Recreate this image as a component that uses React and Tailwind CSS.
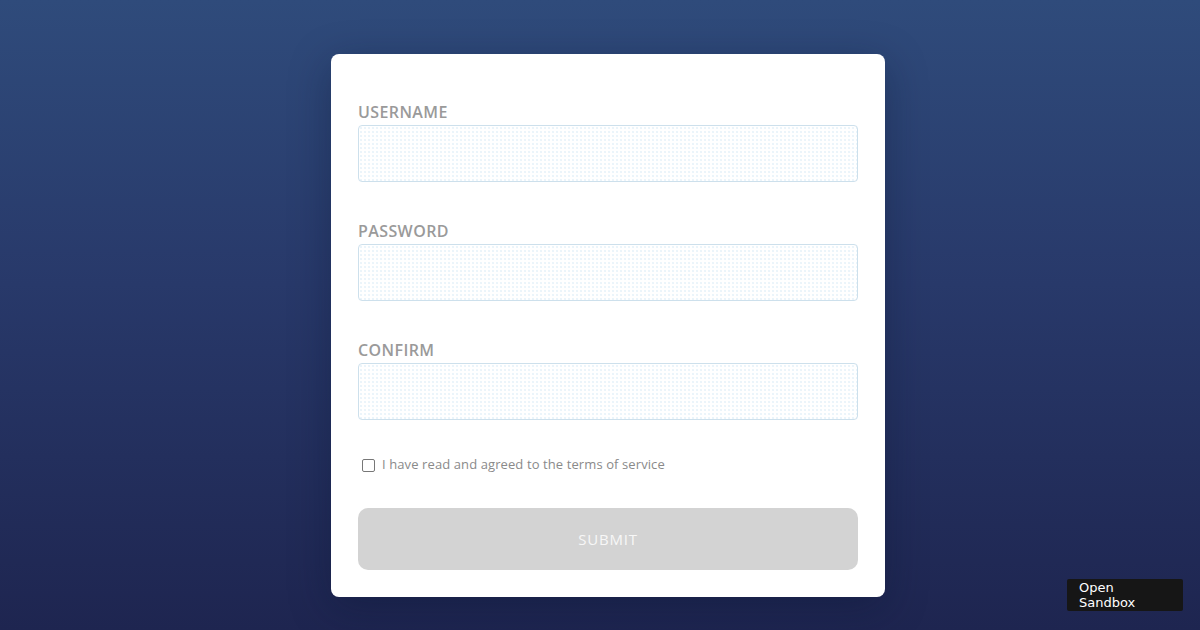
import React from "react";

function Field({ label }) {
  return (
    <div className="flex flex-col mb-[37px]">
      <label className="h-6 text-[16px] leading-6 font-semibold tracking-[0.4px] text-[#9a9a9a]">{label}</label>
      <div className="mt-[1px] h-[57px] rounded-[4px] border border-[#cde0ec] bg-white bg-[radial-gradient(#d4e8f4_0.6px,transparent_0.8px)] bg-[length:4px_4px]"></div>
    </div>
  );
}

export default function App() {
  return (
    <div
      className="relative w-[1200px] h-[630px] overflow-hidden bg-[linear-gradient(180deg,#2f4b7b_0%,#28396a_45%,#1e2550_100%)] flex justify-center items-start pl-[16px]"
      style={{ fontFamily: '"Open Sans", "Noto Sans", sans-serif' }}
    >
      <div className="mt-[54px] w-[554px] rounded-[8px] bg-white px-[27px] pt-[46px] pb-[27px] shadow-[0_10px_40px_rgba(10,20,50,0.35)] flex flex-col">
        <Field label="USERNAME" />
        <Field label="PASSWORD" />
        <Field label="CONFIRM" />
        <div className="-mt-[4px] flex items-center h-6 pl-[4px]">
          <span className="w-[13px] h-[13px] rounded-[2px] border border-[#777] bg-white"></span>
          <span className="ml-[7px] text-[13px] text-[#8a8a8a] tracking-[0.1px]">I have read and agreed to the terms of service</span>
        </div>
        <button className="mt-[31px] h-[62px] w-full rounded-[10px] bg-[#d3d3d3] text-[15px] tracking-[0.8px] text-[#f7f7f7]">
          SUBMIT
        </button>
      </div>
      <div
        className="absolute left-[1067px] top-[579px] w-[116px] h-[32px] rounded-[2px] bg-[#161616] pl-[12px] text-[13px] leading-[15px] text-white pt-[1px]"
        style={{ fontFamily: '"DejaVu Sans", sans-serif' }}
      >
        Open<br />Sandbox
      </div>
    </div>
  );
}
